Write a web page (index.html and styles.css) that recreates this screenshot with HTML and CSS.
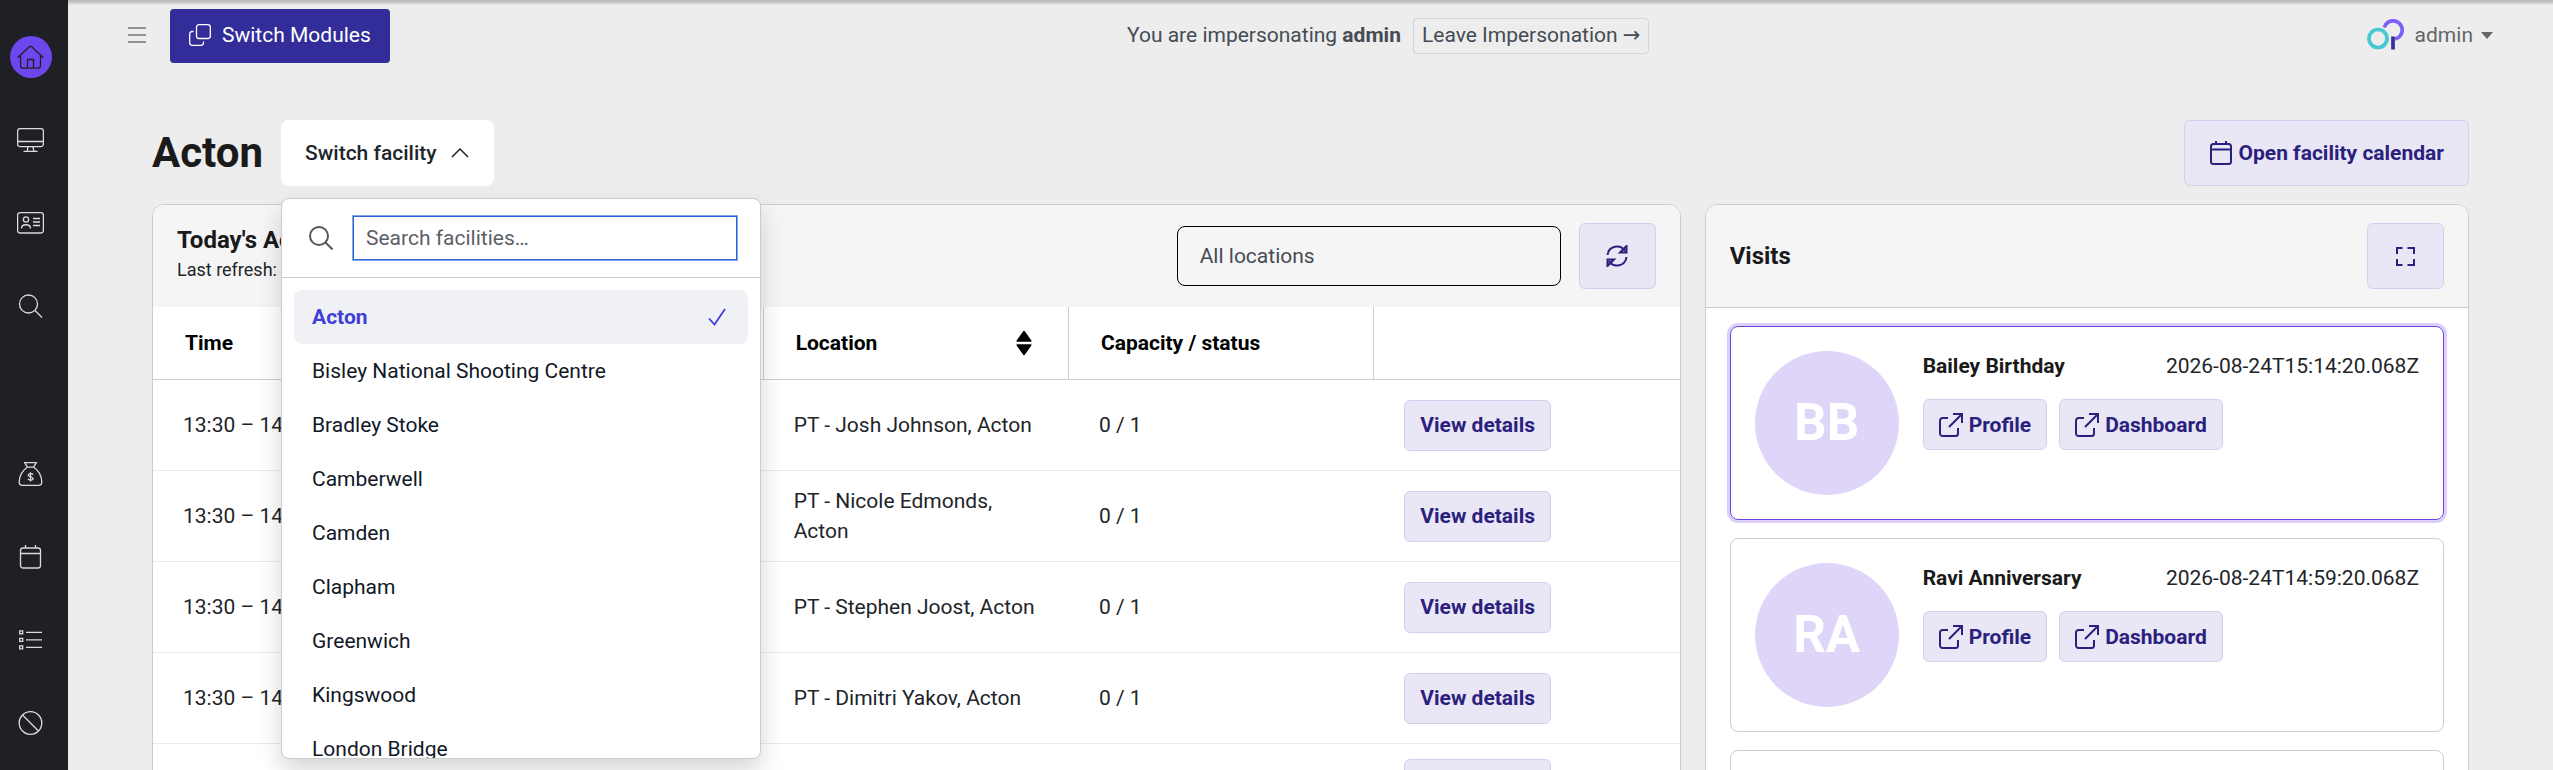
FILE: index.html
```html
<!DOCTYPE html>
<html lang="en">
<head>
<meta charset="utf-8">
<title>Acton</title>
<meta name="viewport" content="width=device-width, initial-scale=1">
<link rel="stylesheet" href="styles.css">
</head>
<body>
<svg class="sprite" aria-hidden="true">
  <symbol id="i-cal" viewBox="0 0 24 24"><rect x="2" y="3" width="20" height="20" rx="2.500"/><path d="M2 8.500h20M7 0v3M17 0v3"/></symbol>
  <symbol id="i-search" viewBox="0 0 24 24"><circle cx="10" cy="10" r="9"/><path d="m16.500 16.500 7 7"/></symbol>
  <symbol id="i-external" viewBox="0 0 24 24"><path d="M9 5H3.500A2.500 2.500 0 0 0 1 7.500v13A2.500 2.500 0 0 0 3.500 23h13a2.500 2.500 0 0 0 2.500-2.500V15M14 1h9v9M23 1 10 14"/></symbol>
</svg>
<div class="app">
  <nav class="sidebar" aria-label="Main">
    <a class="nav-item active" href="#" aria-label="Home"><svg class="nav-icon" viewBox="0 0 27 24"><path d="M.8 12.500 12.600 1.600a1.200 1.200 0 0 1 1.800 0L26.200 12.500M3.500 10.500v10a2.700 2.700 0 0 0 2.700 2.700h14.600a2.700 2.700 0 0 0 2.700-2.700v-10M10.500 23v-8.500h6V23"/></svg></a>
    <a class="nav-item" href="#" aria-label="Screens"><svg class="nav-icon" viewBox="0 0 27 24"><rect x=".6" y=".6" width="25.800" height="18" rx="2.500"/><path d="M.6 13.500h25.800M11 18.600l-.8 4.700M16 18.600l.8 4.700M6.500 23.300h14"/></svg></a>
    <a class="nav-item" href="#" aria-label="Members"><svg class="nav-icon" viewBox="0 0 27 24"><rect x=".6" y="1.600" width="25.800" height="20.400" rx="2.500"/><circle cx="9" cy="8.500" r="2.600"/><path d="M4.500 17.500c0-5 9-5 9 0M16 7.500h7M16 11h7M16 14.500h7"/></svg></a>
    <a class="nav-item" href="#" aria-label="Search"><svg class="nav-icon"><use href="#i-search"/></svg></a>
    <a class="nav-item spaced" href="#" aria-label="Payments"><svg class="nav-icon" viewBox="0 0 24 24"><path d="M6.200.7h11.600l-2.600 4.500H8.800zM8.800 5.200C4 8 .7 14 .7 20c0 2 1.300 3.300 3.300 3.300h16c2 0 3.300-1.300 3.300-3.300 0-6-3.300-12-8.100-14.800M14.500 12.600c-.8-1.300-4.800-1.300-4.800.6 0 2.200 4.900 1 4.900 3.300 0 2-4.200 2-5.200.4M12 10.200v9.400"/></svg></a>
    <a class="nav-item" href="#" aria-label="Calendar"><svg class="nav-icon"><use href="#i-cal"/></svg></a>
    <a class="nav-item" href="#" aria-label="Lists"><svg class="nav-icon" viewBox="0 0 24 24"><path d="M1.200 2.800h3v3h-3zM1.200 10.300h3v3h-3zM1.200 17.800h3v3h-3zM7.500 4.300h16M7.500 11.800h16M7.500 19.300h16"/></svg></a>
    <a class="nav-item" href="#" aria-label="Blocked"><svg class="nav-icon" viewBox="0 0 24 24"><circle cx="12" cy="12" r="11.300"/><path d="m4 4 16 16"/></svg></a>
  </nav>
  <div class="page">
    <header class="topbar">
      <div class="topbar-left">
        <button class="menu-toggle" type="button" aria-label="Toggle menu"><svg viewBox="0 0 18 16"><path d="M0 1h18M0 8h18M0 15h18"/></svg></button>
        <button class="modules" type="button"><svg viewBox="0 0 22 22"><rect x="7.500" y=".7" width="13.800" height="13.800" rx="2.500"/><path d="M4.500 7.500H3.200A2.500 2.500 0 0 0 .7 10v8.800a2.500 2.500 0 0 0 2.500 2.500H12a2.500 2.500 0 0 0 2.500-2.500v-1.300"/></svg>Switch Modules</button>
      </div>
      <div class="impersonation"><span>You are impersonating <strong>admin</strong></span><button class="leave" type="button">Leave Impersonation →</button></div>
      <button class="account" type="button"><svg class="logo" viewBox="0 0 38 32"><path d="M17.200 8.500A9.200 9.200 0 1 1 28 20" stroke="#7d5ff8"/><path d="M26 17.500v13" stroke="#352f9b"/><circle cx="11" cy="19.500" r="11.800" fill="#ededed" stroke="none"/><circle cx="11" cy="19.500" r="9" stroke="#48c9d6"/></svg>admin<svg class="caret" viewBox="0 0 12 7"><path d="M0 0h12L6 7z"/></svg></button>
    </header>
    <main class="content">
      <div class="heading">
        <h1>Acton</h1>
        <div class="switcher">
          <button class="switch-button" type="button" aria-expanded="true">Switch facility<svg viewBox="0 0 18 10"><path d="m1 9 8-8 8 8"/></svg></button>
          <div class="facility-menu">
            <label class="facility-search"><svg><use href="#i-search"/></svg><input type="text" placeholder="Search facilities…" aria-label="Search facilities"></label>
            <ul class="facility-list">
              <li><button class="selected" type="button">Acton<svg viewBox="0 0 18 18"><path d="m1 10.500 5.500 6L17 1"/></svg></button></li>
              <li><button type="button">Bisley National Shooting Centre</button></li>
              <li><button type="button">Bradley Stoke</button></li>
              <li><button type="button">Camberwell</button></li>
              <li><button type="button">Camden</button></li>
              <li><button type="button">Clapham</button></li>
              <li><button type="button">Greenwich</button></li>
              <li><button type="button">Kingswood</button></li>
              <li><button type="button">London Bridge</button></li>
            </ul>
          </div>
        </div>
        <a class="soft-button large calendar-link" href="#"><svg><use href="#i-cal"/></svg>Open facility calendar</a>
      </div>
      <div class="panels">
        <section class="panel">
          <div class="panel-header">
            <div><h2>Today's Activities</h2><p>Last refresh: 13:20</p></div>
            <input class="location-filter" type="text" placeholder="All locations" aria-label="Location">
            <button class="soft-button large icon-only" type="button" aria-label="Refresh"><svg viewBox="0 0 22 22"><path d="M1.500 10A9.500 9.500 0 0 1 19 6M20.500 12A9.500 9.500 0 0 1 3 16M20.500 1v6.500H14zM1.500 21v-6.500H8z"/></svg></button>
          </div>
          <table>
            <thead><tr><th>Time</th><th>Activity</th><th><span class="sortable">Location<svg viewBox="0 0 16 26"><path d="M8 1.500 14.800 11H1.200zM8 24.500 14.800 15H1.200z"/></svg></span></th><th>Capacity / status</th><th></th></tr></thead>
            <tbody>
              <tr class="tall"><td>13:30 – 14:30</td><td>PT Session</td><td>PT - Josh Johnson, Acton</td><td>0 / 1</td><td><button class="soft-button" type="button">View details</button></td></tr>
              <tr class="tall"><td>13:30 – 14:30</td><td>PT Session</td><td>PT - Nicole Edmonds, Acton</td><td>0 / 1</td><td><button class="soft-button" type="button">View details</button></td></tr>
              <tr class="tall"><td>13:30 – 14:30</td><td>PT Session</td><td>PT - Stephen Joost, Acton</td><td>0 / 1</td><td><button class="soft-button" type="button">View details</button></td></tr>
              <tr class="tall"><td>13:30 – 14:30</td><td>PT Session</td><td>PT - Dimitri Yakov, Acton</td><td>0 / 1</td><td><button class="soft-button" type="button">View details</button></td></tr>
              <tr><td></td><td></td><td></td><td></td><td><button class="soft-button" type="button">View details</button></td></tr>
            </tbody>
          </table>
        </section>
        <section class="panel">
          <div class="panel-header ruled">
            <h2>Visits</h2>
            <button class="soft-button large icon-only" type="button" aria-label="Full screen"><svg viewBox="0 0 22 22"><path d="M3 9V3h5.500M13.500 3H20v6M20 14v6h-6.500M8.500 20H3v-6"/></svg></button>
          </div>
          <div class="visits">
            <article class="visit current">
              <div class="avatar">BB</div>
              <div class="visit-body">
                <div class="visit-top"><h3>Bailey Birthday</h3><time>2026-08-24T15:14:20.068Z</time></div>
                <div class="visit-actions"><a class="soft-button" href="#"><svg><use href="#i-external"/></svg>Profile</a><a class="soft-button" href="#"><svg><use href="#i-external"/></svg>Dashboard</a></div>
              </div>
            </article>
            <article class="visit">
              <div class="avatar">RA</div>
              <div class="visit-body">
                <div class="visit-top"><h3>Ravi Anniversary</h3><time>2026-08-24T14:59:20.068Z</time></div>
                <div class="visit-actions"><a class="soft-button" href="#"><svg><use href="#i-external"/></svg>Profile</a><a class="soft-button" href="#"><svg><use href="#i-external"/></svg>Dashboard</a></div>
              </div>
            </article>
            <article class="visit"></article>
          </div>
        </section>
      </div>
    </main>
  </div>
</div>
</body>
</html>
```
FILE: styles.css
```css
* { box-sizing: border-box; }
html { height: 100%; }
body { height: 100%; margin: 0; overflow: hidden; background: #ededed; color: #212529; font: 21px/30px Roboto, "DejaVu Sans", sans-serif; }
h1, h2, h3, p, ul { margin: 0; padding: 0; font-weight: 700; }
ul { list-style: none; font-weight: 400; }
button, input { font: inherit; color: inherit; }
button { cursor: pointer; }
a { color: inherit; text-decoration: none; }
svg { fill: none; stroke: currentColor; flex: none; }
.sprite { position: absolute; width: 0; height: 0; }

.app { display: flex; height: 100vh; overflow: hidden; }
.sidebar { flex: none; display: flex; flex-direction: column; align-items: center; gap: 41px; width: 68px; padding: 36px 7px 0 0; background: #1f2025; color: #dcdcdc; }
.nav-item { display: grid; place-items: center; flex: none; width: 42px; height: 42px; border-radius: 50%; }
.nav-item.active { background: #6c47ee; color: #1f2025; }
.nav-item.spaced { margin-top: 85px; }
.nav-icon { width: 27px; height: 24px; stroke-width: 1.3; }

.page { flex: 1; min-width: 0; background: linear-gradient(#b8b8b8, #c4c4c4 2px, #ededed 5px); }
.topbar { display: flex; justify-content: space-between; align-items: flex-start; padding: 9px 60px 0; }
.topbar-left { display: flex; align-items: center; gap: 24px; }
.menu-toggle { display: grid; padding: 0 0 2px; border: 0; background: none; color: #747474; }
.menu-toggle svg { width: 18px; height: 16px; stroke-width: 1.5; }
.modules { display: flex; align-items: center; gap: 11px; height: 54px; padding: 0 19px 2px; border: 0; border-radius: 4px; background: #322d99; color: #fff; }
.modules svg { width: 22px; height: 22px; stroke-width: 1.3; }
.impersonation { display: flex; align-items: center; gap: 12px; margin-left: 20px; padding-top: 9px; color: #454c54; }
.impersonation span { padding-bottom: 2px; }
.leave { height: 36px; padding: 0 8px 2px; border: 1px solid #ced4da; border-radius: 4px; background: none; line-height: 30px; }
.account { display: flex; align-items: center; gap: 10px; margin-top: 9px; height: 36px; padding: 0 0 2px; border: 0; background: none; color: #666; }
.logo { width: 38px; height: 32px; stroke-width: 3.7; }
.caret { width: 12px; height: 7px; margin-left: -2px; fill: currentColor; stroke: none; }

.content { padding: 57px 84px 0; }
.heading { display: flex; align-items: center; gap: 18px; }
h1 { font-size: 42px; line-height: 50px; color: #1a1a1a; }
.switcher { position: relative; }
.switch-button { display: flex; align-items: center; gap: 14px; height: 66px; padding: 0 25px 0 24px; border: 0; border-radius: 8px; background: #fff; font-weight: 500; }
.switch-button svg { width: 18px; height: 10px; stroke-width: 1.5; }
.facility-menu { position: absolute; z-index: 2; top: calc(100% + 12px); left: 0; width: 480px; height: 561px; overflow: hidden; border: 1px solid #ccc; border-radius: 8px; background: #fff; box-shadow: 0 12px 24px rgba(0,0,0,.16); }
.facility-search { display: flex; align-items: center; gap: 19px; padding: 16px 22px 16px 27px; border-bottom: 1px solid #ccc; color: #55575c; }
.facility-search svg { width: 24px; height: 24px; stroke-width: 2; }
.facility-search input { flex: 1; min-width: 0; height: 46px; padding: 0 13px; border: 1px solid #85a4ec; box-shadow: inset 0 0 0 1px #2b62dc; outline: 0; }
input::placeholder { color: #5c5f66; opacity: 1; }
.facility-list { padding: 12px; }
.facility-list button { display: flex; align-items: center; justify-content: space-between; width: 100%; height: 54px; padding: 0 18px; border: 0; border-radius: 8px; background: none; color: #111827; }
.facility-list .selected { background: #f0f1f4; color: #4040d9; font-weight: 700; }
.facility-list svg { width: 18px; height: 18px; margin-right: 4px; stroke-width: 1.8; }

.soft-button { display: inline-flex; align-items: center; gap: 6px; height: 51px; padding: 0 15px; border: 1px solid #d3cfee; border-radius: 6px; background: #e9e6f5; color: #29217d; font-weight: 700; white-space: nowrap; }
.soft-button.large { height: 66px; padding: 0 24px; }
.soft-button svg { width: 24px; height: 24px; stroke-width: 2; }
.calendar-link { margin-left: auto; }
.soft-button.icon-only { justify-content: center; width: 77px; }
.soft-button.icon-only svg { width: 22px; height: 22px; }

.panels { display: grid; grid-template-columns: 2fr 1fr; gap: 24px; margin-top: 18px; }
.panel { min-width: 0; overflow: hidden; border: 1px solid #ccc; border-radius: 12px; background: #fff; }
.panel-header { display: flex; align-items: center; gap: 18px; padding: 18px 24px; background: #f5f5f5; }
.panel-header.ruled { border-bottom: 1px solid #ccc; }
.panel-header > :first-child { margin-right: auto; }
h2 { font-size: 24px; line-height: 32px; color: #1a1a1a; }
.panel-header p { margin-bottom: 6px; font-size: 18px; line-height: 27px; font-weight: 400; }
.location-filter { width: 384px; height: 60px; padding: 0 22px; border: 1px solid #000; border-radius: 8px; background: transparent; }
.location-filter::placeholder { color: #454c54; }
table { width: 100%; table-layout: fixed; border-collapse: separate; border-spacing: 0; }
th { height: 73px; padding: 0 32px; border-bottom: 1px solid #ccc; color: #000; text-align: left; }
th:not(:last-child) { border-right: 1px solid #ccc; }
td { padding: 15px 30px; border-bottom: 1px solid #ebebeb; }
td .soft-button { vertical-align: top; }
.tall { height: 91px; }
.sortable { display: flex; align-items: center; justify-content: space-between; margin-right: 4px; }
.sortable svg { width: 16px; height: 26px; fill: currentColor; stroke-linejoin: round; stroke-width: 1.5; }

.visits { display: grid; gap: 18px; padding: 18px 24px; }
.visit { display: flex; align-items: flex-start; gap: 24px; min-height: 194px; padding: 24px; border: 1px solid #ccc; border-radius: 8px; }
.visit.current { border-color: #6a43e0; box-shadow: 0 0 0 3px #dcd0fa; }
.avatar { display: grid; place-items: center; flex: none; width: 144px; height: 144px; border-radius: 50%; background: #dfd5f9; color: #fff; font-size: 51px; font-weight: 700; }
.visit-body { flex: 1; min-width: 0; }
.visit-top { display: flex; justify-content: space-between; }
h3 { font-size: 21px; line-height: 30px; color: #1a1a1a; }
.visit-actions { display: flex; gap: 12px; margin-top: 18px; }
```
